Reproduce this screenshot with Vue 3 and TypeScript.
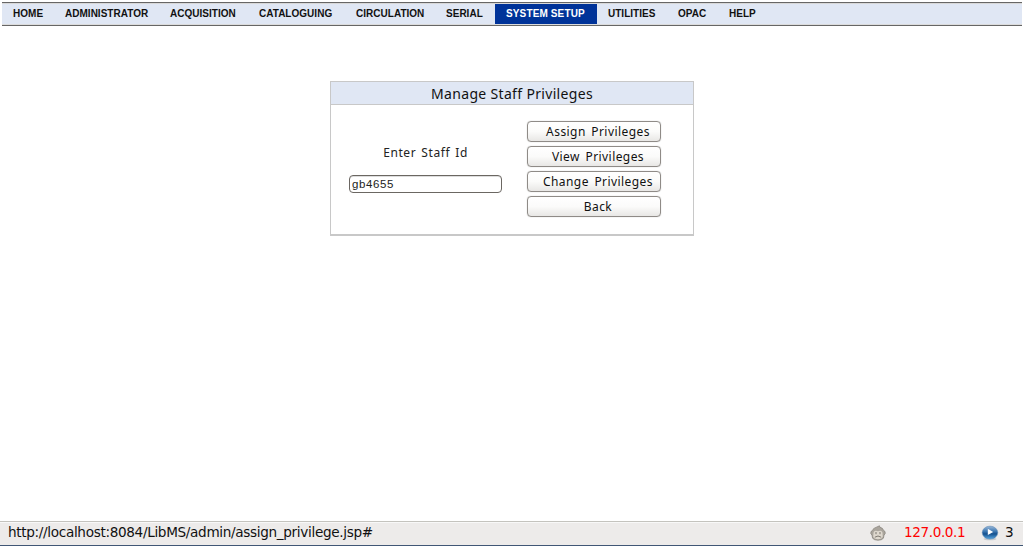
<script setup lang="ts">
import { ref } from 'vue'

interface MenuItem { label: string; width: number }

const menu: MenuItem[] = [
  { label: 'HOME', width: 52 },
  { label: 'ADMINISTRATOR', width: 105 },
  { label: 'ACQUISITION', width: 89 },
  { label: 'CATALOGUING', width: 97 },
  { label: 'CIRCULATION', width: 90 },
  { label: 'SERIAL', width: 60 },
  { label: 'SYSTEM SETUP', width: 102 },
  { label: 'UTILITIES', width: 70 },
  { label: 'OPAC', width: 51 },
  { label: 'HELP', width: 49 },
]
const active = 'SYSTEM SETUP'
const staffId = ref('gb4655')
</script>

<template>
  <div class="page">
    <nav class="menu">
      <a
        v-for="item in menu"
        :key="item.label"
        class="menu-item"
        :class="{ active: item.label === active }"
        :style="{ width: item.width + 'px' }"
      >{{ item.label }}</a>
    </nav>

    <main class="content">
      <form class="panel" @submit.prevent>
        <h1 class="title">Manage Staff Privileges</h1>
        <div class="body">
          <div class="field">
            <label class="label" for="staff">Enter Staff Id</label>
            <input id="staff" v-model="staffId" class="input" type="text" />
          </div>
          <div class="buttons">
            <button class="btn" type="button">Assign Privileges</button>
            <button class="btn" type="button">View Privileges</button>
            <button class="btn" type="button">Change Privileges</button>
            <button class="btn" type="button">Back</button>
          </div>
        </div>
      </form>
    </main>

    <footer class="status">
      <span class="url">http://localhost:8084/LibMS/admin/assign_privilege.jsp#</span>
      <svg class="monkey" width="16" height="16" viewBox="0 0 16 16">
        <path d="M2.5 5.5Q3 3.2 6 2.4L9.5 .8 9.8 2.2Q13 2.8 13.6 5.5Q15.6 6 15.2 8.5L14 10.2 13.4 13.2Q12 15.2 8 15.2T2.6 13.2L2 10.2.8 8.5Q.4 6 2.5 5.5Z" fill="#aaa59d" stroke="#8a867f" stroke-width=".8" />
        <path d="M3.6 7.2Q5 5 8 6.3Q11 5 12.4 7.2L12.8 11.5Q12 14.2 8 14.2T3.2 11.5Z" fill="#ded8ce" />
        <path d="M6 7v2.2M10 7v2.2M4.8 12.2Q8 9.8 11.2 12.2" fill="none" stroke="#7d7870" stroke-width="1" />
      </svg>
      <span class="ip">127.0.0.1</span>
      <svg class="play" width="18" height="16" viewBox="0 0 18 16">
        <defs>
          <linearGradient id="ball" x1="0" y1="0" x2="0" y2="1">
            <stop offset="0" stop-color="#9ab8d8" />
            <stop offset=".42" stop-color="#3975b0" />
            <stop offset=".6" stop-color="#14508e" />
            <stop offset="1" stop-color="#58a8e2" />
          </linearGradient>
        </defs>
        <ellipse cx="9" cy="14" rx="6.5" ry="1.3" fill="#c5cacf" />
        <ellipse cx="9" cy="7.6" rx="7.8" ry="6.5" fill="url(#ball)" stroke="#5c86b0" stroke-width=".5" />
        <path d="M6.8 3.8L12.2 6.9 6.8 10Z" fill="#fff" />
      </svg>
      <span class="count">3</span>
    </footer>
  </div>
</template>

<style>
body { margin: 0; background: #fff; }
</style>

<style scoped>
.page { display: flex; flex-direction: column; width: 1023px; height: 546px; box-sizing: border-box; padding-top: 2px; overflow: hidden; background: #fff; }
.menu { display: flex; box-sizing: border-box; height: 24px; margin: 0 1px 0 2px; padding: 1px 0 1px; background: #e0e7f4; border-top: 1px solid #666; border-bottom: 1px solid #666; box-shadow: inset 0 1px #d8d8d8, inset 0 -1px #dcdcdc; flex: none; }
.menu-item { display: block; flex: none; box-sizing: border-box; height: 20px; padding-left: 11px; font: bold 10px/19px "Liberation Sans", Arial, sans-serif; letter-spacing: .02px; color: #111; white-space: nowrap; }
.menu-item.active { background: #039; color: #fff; letter-spacing: .13px; }
.content { flex: 1; padding-top: 55px; }
.panel { box-sizing: border-box; width: 364px; height: 155px; margin: 0 auto 0 330px; border: 1px solid #c8c8c8; border-bottom-width: 2px; }
.title { margin: 0; height: 22px; background: #e0e7f4; border-bottom: 1px solid #c8c8c8; font: 14px/23px "Noto Sans", sans-serif; letter-spacing: .33px; color: #111; text-align: center; }
.body { display: flex; padding: 16px 0 0 18px; }
.field { width: 153px; padding-top: 22px; display: flex; flex-direction: column; }
.label { font: 12px/20px "Noto Sans", sans-serif; letter-spacing: .6px; word-spacing: 1.3px; text-align: center; color: #222; }
.input { box-sizing: border-box; width: 153px; height: 18px; margin: 12px 0 0; padding: 0 2px; border: 1px solid #6b6762; border-radius: 4px; outline: none; background: #fff; font: 11.5px/16px "Liberation Sans", Arial, sans-serif; letter-spacing: .6px; color: #222; box-shadow: inset 0 1px #ddd; }
.buttons { display: flex; flex-direction: column; gap: 4px; margin-left: 25px; }
.btn { box-sizing: border-box; width: 134px; height: 21px; margin: 0; padding: 0 0 0 8px; border: 1px solid #8f8b87; border-radius: 4px; background: linear-gradient(#fff, #fbfbfa 50%, #e8e7e5); box-shadow: 0 0 1px #aaa; font: 12px/19px "Noto Sans", sans-serif; letter-spacing: .43px; word-spacing: 2px; color: #111; text-align: center; white-space: nowrap; }
.status { flex: none; display: flex; align-items: center; box-sizing: border-box; height: 25px; padding: 0 0 2px 8px; background: #edebea; border-top: 1px solid #c4c3be; border-bottom: 1px solid #405775; box-shadow: inset 0 1px #f8f8f8; font: 13.6px/21px "DejaVu Sans", sans-serif; letter-spacing: -.33px; color: #111; }
.url { width: 862px; white-space: nowrap; }
.monkey { flex: none; }
.ip { width: 77px; margin-left: 18px; letter-spacing: -.4px; color: #f00; }
.play { flex: none; }
.count { margin-left: 6px; }
</style>
